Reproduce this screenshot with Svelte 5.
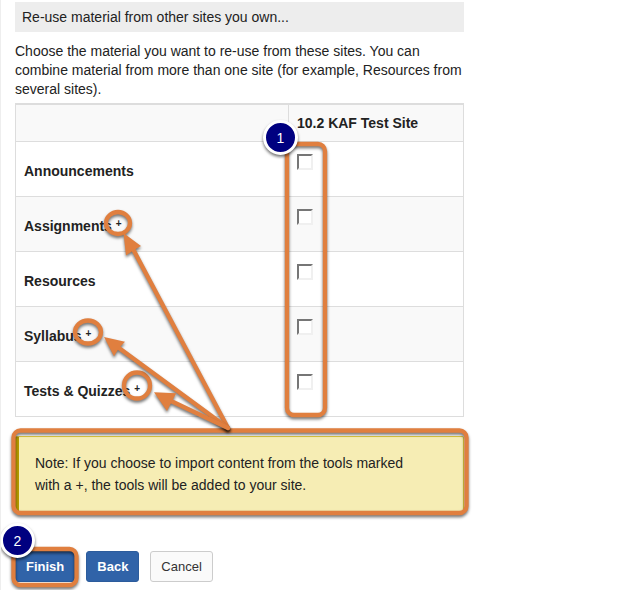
<script>
  let tools = $state([
    { id: 'announcements', name: 'Announcements', added: false, checked: false },
    { id: 'assignments', name: 'Assignments', added: true, checked: false },
    { id: 'resources', name: 'Resources', added: false, checked: false },
    { id: 'syllabus', name: 'Syllabus', added: true, checked: false },
    { id: 'quizzes', name: 'Tests & Quizzes', added: true, checked: false }
  ]);

  const rings = [
    { cx: 118, cy: 223, rx: 12, ry: 11 },
    { cx: 88, cy: 332, rx: 13, ry: 11.5 },
    { cx: 137, cy: 385.5, rx: 13, ry: 13 }
  ];

  const arrows = [
    { shaft: 'M228 428L133 249', head: '123.5,233 141,246 134,250 126,255.5' },
    { shaft: 'M228 428L119 348', head: '104,337 125,341.7 119,348 114,356.3' },
    { shaft: 'M228 428L171 401', head: '154,392.3 176.3,393.3 172,401 167,411' }
  ];

  const frames = [
    { x: 287, y: 144, width: 38, height: 271 },
    { x: 13.5, y: 430.5, width: 453, height: 82.5 },
    { x: 13.5, y: 549, width: 63, height: 36 }
  ];

  const badges = [
    { cx: 280.5, cy: 137.5, label: '1' },
    { cx: 17.5, cy: 540.5, label: '2' }
  ];
</script>

<main>
  <form onsubmit={(e) => e.preventDefault()}>
    <h1>Re-use material from other sites you own...</h1>
    <p class="intro">
      Choose the material you want to re-use from these sites. You can combine material from more
      than one site (for example, Resources from several sites).
    </p>

    <table>
      <thead>
        <tr>
          <td></td>
          <th scope="col">10.2 KAF Test Site</th>
        </tr>
      </thead>
      <tbody>
        {#each tools as tool (tool.id)}
          <tr>
            <th scope="row">
              <label for={tool.id}>{tool.name}{#if tool.added}{' '}<span class="plus">+</span>{/if}</label>
            </th>
            <td><input type="checkbox" id={tool.id} bind:checked={tool.checked} /></td>
          </tr>
        {/each}
      </tbody>
    </table>

    <p class="note">
      Note: If you choose to import content from the tools marked with a +, the tools will be added
      to your site.
    </p>

    <div class="actions">
      <button class="primary" type="submit">Finish</button>
      <button class="primary" type="button">Back</button>
      <button type="button">Cancel</button>
    </div>
  </form>

  <svg class="callouts" width="632" height="590" viewBox="0 0 632 590">
    {#each rings as ring}
      <ellipse class="stroke shadow" {...ring} />
    {/each}
    {#each frames as frame}
      <rect class="stroke shadow" {...frame} rx="7" />
    {/each}
    {#each arrows as arrow}
      <g class="shadow">
        <path class="stroke" d={arrow.shaft} stroke-linecap="round" />
        <polygon class="head" points={arrow.head} />
      </g>
    {/each}
    {#each badges as badge}
      <circle class="disc shadow" cx={badge.cx} cy={badge.cy} r="16" />
      <text x={badge.cx} y={badge.cy + 5} text-anchor="middle">{badge.label}</text>
    {/each}
  </svg>
</main>

<style>
  :global(body) {
    margin: 0;
    background: #fff;
  }

  main {
    position: relative;
    box-sizing: border-box;
    min-height: 100vh;
    padding: 2px 14px 0;
    overflow: hidden;
    border-left: 1px solid #eee;
    color: #222;
    font-family: 'Liberation Sans', Arial, sans-serif;
    font-size: 14px;
  }

  form {
    max-width: 449px;
  }

  h1 {
    margin: 0;
    padding: 0 7px;
    background: #ededed;
    font-size: 14px;
    font-weight: 400;
    line-height: 30px;
  }

  .intro {
    margin: 10px 0 4px;
    line-height: 19px;
  }

  table {
    width: 100%;
    border-collapse: collapse;
    border: 1px solid #ddd;
    border-top-width: 2px;
    table-layout: fixed;
  }

  td,
  th {
    box-sizing: border-box;
    height: 55px;
    padding: 4px 8px 0;
    border-bottom: 1px solid #ddd;
    text-align: left;
  }

  tbody td {
    padding: 12px 8px 0;
    vertical-align: top;
  }

  thead td {
    width: 273px;
    border-right: 1px solid #ddd;
  }

  thead td,
  thead th {
    height: 37px;
    padding: 0 8px;
  }

  thead tr,
  tbody tr:nth-child(even) {
    background: #f9f9f9;
  }

  .plus {
    font-size: 10px;
    vertical-align: 4px;
    line-height: 10px;
  }

  input {
    display: block;
    box-sizing: border-box;
    width: 16px;
    height: 16px;
    margin: 0;
    appearance: none;
    background: #fff;
    border: 2px solid;
    border-color: #767676 #f0f0f0 #f0f0f0 #767676;
  }

  input:checked {
    background: #3063a8;
  }

  .note {
    margin: 19px 0 39px;
    padding: 15px 45px 15px 16px;
    background: #f6edb4;
    border: 1px solid #e0c93f;
    border-left: 4px solid #b59b00;
    border-radius: 2px;
    line-height: 22px;
  }

  .actions {
    display: flex;
    gap: 11px;
  }

  button {
    box-sizing: border-box;
    height: 31px;
    padding: 0 10px;
    border: 1px solid #ccc;
    border-radius: 3px;
    background: #fafafa;
    color: #333;
    font: 13px 'Liberation Sans', Arial, sans-serif;
  }

  .primary {
    border-color: #2c5c9c;
    background: #3063a8;
    color: #fff;
    font-weight: 700;
  }

  .callouts {
    position: absolute;
    top: 0;
    left: -1px;
    pointer-events: none;
  }

  .stroke {
    fill: none;
    stroke: #e07f3f;
    stroke-width: 4.3;
  }

  .head {
    fill: #e07f3f;
  }

  .shadow {
    filter: drop-shadow(0 2px 1.5px rgba(0, 0, 0, 0.55));
  }

  .disc {
    fill: #000080;
    stroke: #fff;
    stroke-width: 3;
  }

  text {
    fill: #fff;
    font-size: 14px;
  }
</style>
